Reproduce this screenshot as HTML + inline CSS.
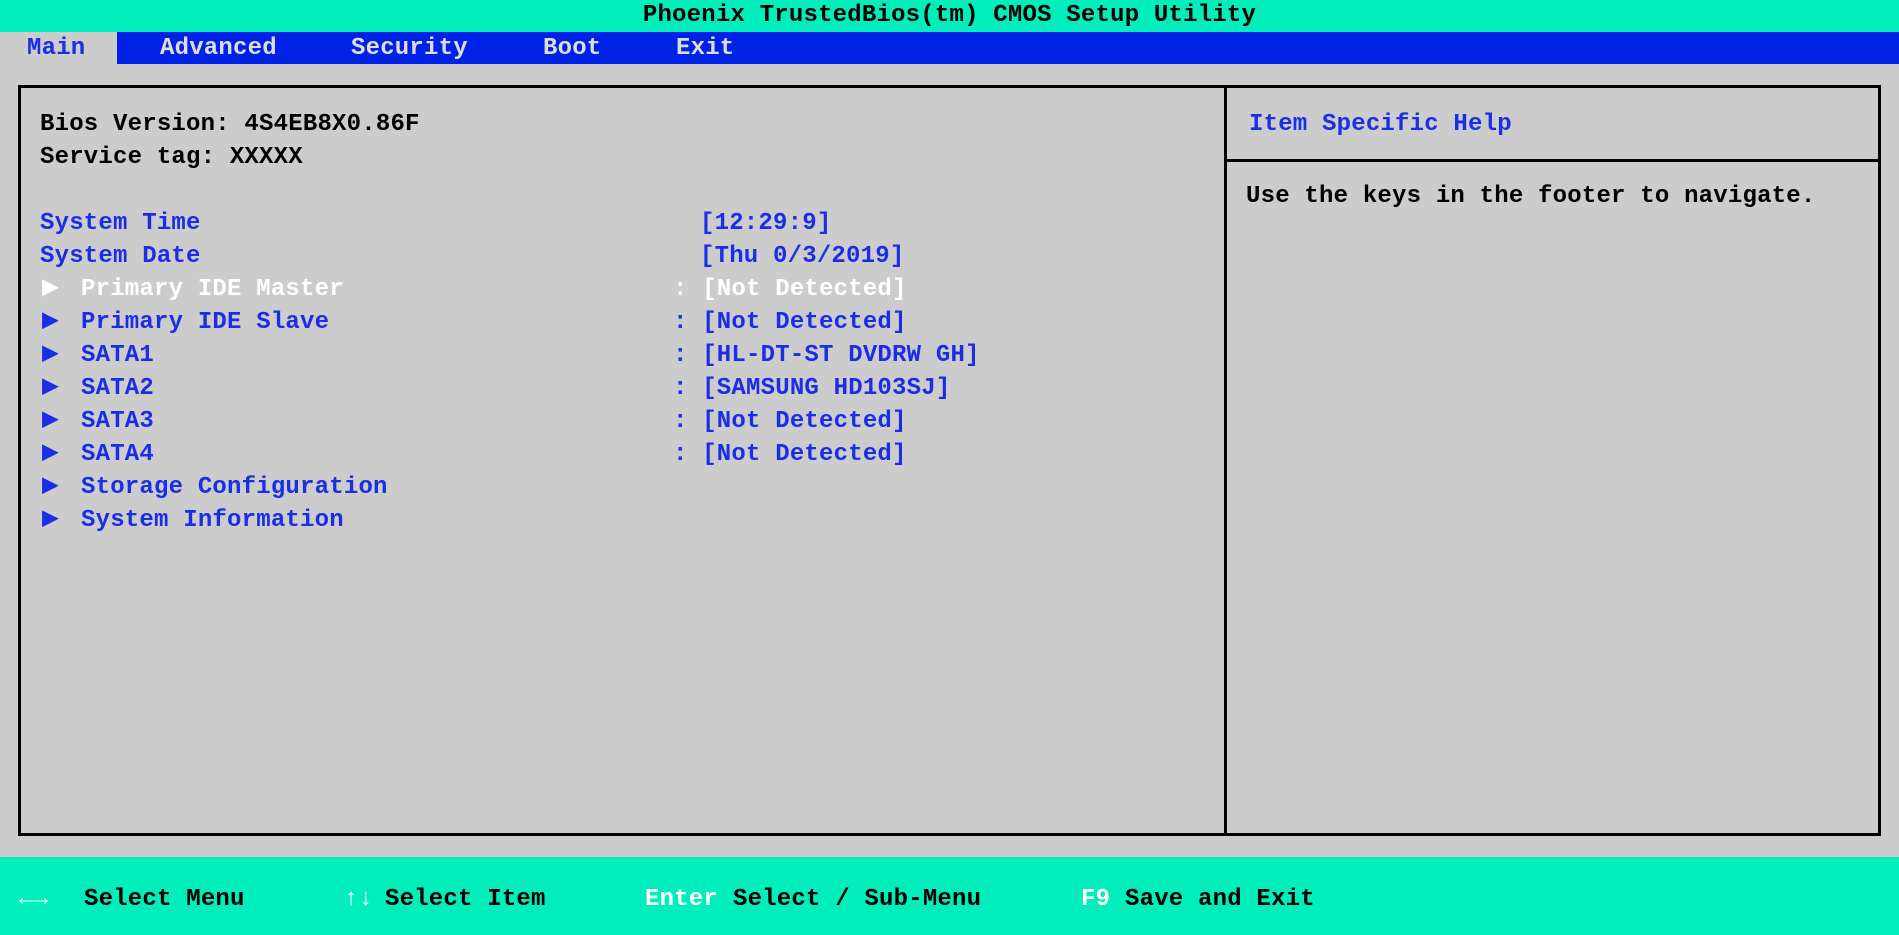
<!DOCTYPE html>
<html><head><meta charset="utf-8"><style>
*{margin:0;padding:0;box-sizing:border-box}
body{width:1899px;height:935px;background:#cccccc;position:relative;overflow:hidden;font-family:"Liberation Mono","DejaVu Sans Mono",monospace;font-weight:bold;font-size:24px;letter-spacing:0.2px}
.t{position:absolute;white-space:pre;line-height:30px;height:30px}
.b{color:#1a2ee6}.w{color:#fff}.k{color:#000}
.a{font-size:28px;margin-top:-1px}
</style></head><body>
<div style="position:absolute;left:0;top:0;width:1899px;height:32px;background:#00eebb"></div>
<div class="t k" style="left:0;width:1899px;text-align:center;top:1px">Phoenix TrustedBios(tm) CMOS Setup Utility</div>
<div style="position:absolute;left:117px;top:32px;width:1782px;height:32px;background:#0022e6"></div>
<div class="t b" style="left:27px;top:34px">Main</div>
<div class="t" style="left:160px;top:34px;color:#ddd">Advanced</div>
<div class="t" style="left:351px;top:34px;color:#ddd">Security</div>
<div class="t" style="left:543px;top:34px;color:#ddd">Boot</div>
<div class="t" style="left:676px;top:34px;color:#ddd">Exit</div>
<div style="position:absolute;left:18px;top:85px;width:1863px;height:751px;border:3px solid #000"></div>
<div style="position:absolute;left:1224px;top:85px;width:3px;height:751px;background:#000"></div>
<div style="position:absolute;left:1224px;top:159px;width:656px;height:3px;background:#000"></div>
<div class="t k" style="left:40px;top:110px">Bios Version: 4S4EB8X0.86F</div>
<div class="t k" style="left:40px;top:143px">Service tag: XXXXX</div>
<div class="t b" style="left:40px;top:209px">System Time</div>
<div class="t b" style="left:700px;top:209px">[12:29:9]</div>
<div class="t b" style="left:40px;top:242px">System Date</div>
<div class="t b" style="left:700px;top:242px">[Thu 0/3/2019]</div>
<div class="t w a" style="left:42px;top:275px">▶</div><div class="t w" style="left:81px;top:275px">Primary IDE Master</div><div class="t w" style="left:673px;top:275px">: [Not Detected]</div>
<div class="t b a" style="left:42px;top:308px">▶</div><div class="t b" style="left:81px;top:308px">Primary IDE Slave</div><div class="t b" style="left:673px;top:308px">: [Not Detected]</div>
<div class="t b a" style="left:42px;top:341px">▶</div><div class="t b" style="left:81px;top:341px">SATA1</div><div class="t b" style="left:673px;top:341px">: [HL-DT-ST DVDRW GH]</div>
<div class="t b a" style="left:42px;top:374px">▶</div><div class="t b" style="left:81px;top:374px">SATA2</div><div class="t b" style="left:673px;top:374px">: [SAMSUNG HD103SJ]</div>
<div class="t b a" style="left:42px;top:407px">▶</div><div class="t b" style="left:81px;top:407px">SATA3</div><div class="t b" style="left:673px;top:407px">: [Not Detected]</div>
<div class="t b a" style="left:42px;top:440px">▶</div><div class="t b" style="left:81px;top:440px">SATA4</div><div class="t b" style="left:673px;top:440px">: [Not Detected]</div>
<div class="t b a" style="left:42px;top:473px">▶</div><div class="t b" style="left:81px;top:473px">Storage Configuration</div>
<div class="t b a" style="left:42px;top:506px">▶</div><div class="t b" style="left:81px;top:506px">System Information</div>
<div class="t b" style="left:1249px;top:110px">Item Specific Help</div>
<div class="t k" style="left:1246px;top:182px">Use the keys in the footer to navigate.</div>
<div style="position:absolute;left:0;top:857px;width:1899px;height:78px;background:#00eebb"></div>
<div class="t w" style="left:19px;top:885px;font-weight:normal">←→</div>
<div class="t k" style="left:84px;top:885px">Select Menu</div>
<div class="t w" style="left:344px;top:885px;font-weight:normal">↑↓</div>
<div class="t k" style="left:385px;top:885px">Select Item</div>
<div class="t w" style="left:645px;top:885px">Enter</div>
<div class="t k" style="left:733px;top:885px">Select / Sub-Menu</div>
<div class="t w" style="left:1081px;top:885px">F9</div>
<div class="t k" style="left:1125px;top:885px">Save and Exit</div>
</body></html>
